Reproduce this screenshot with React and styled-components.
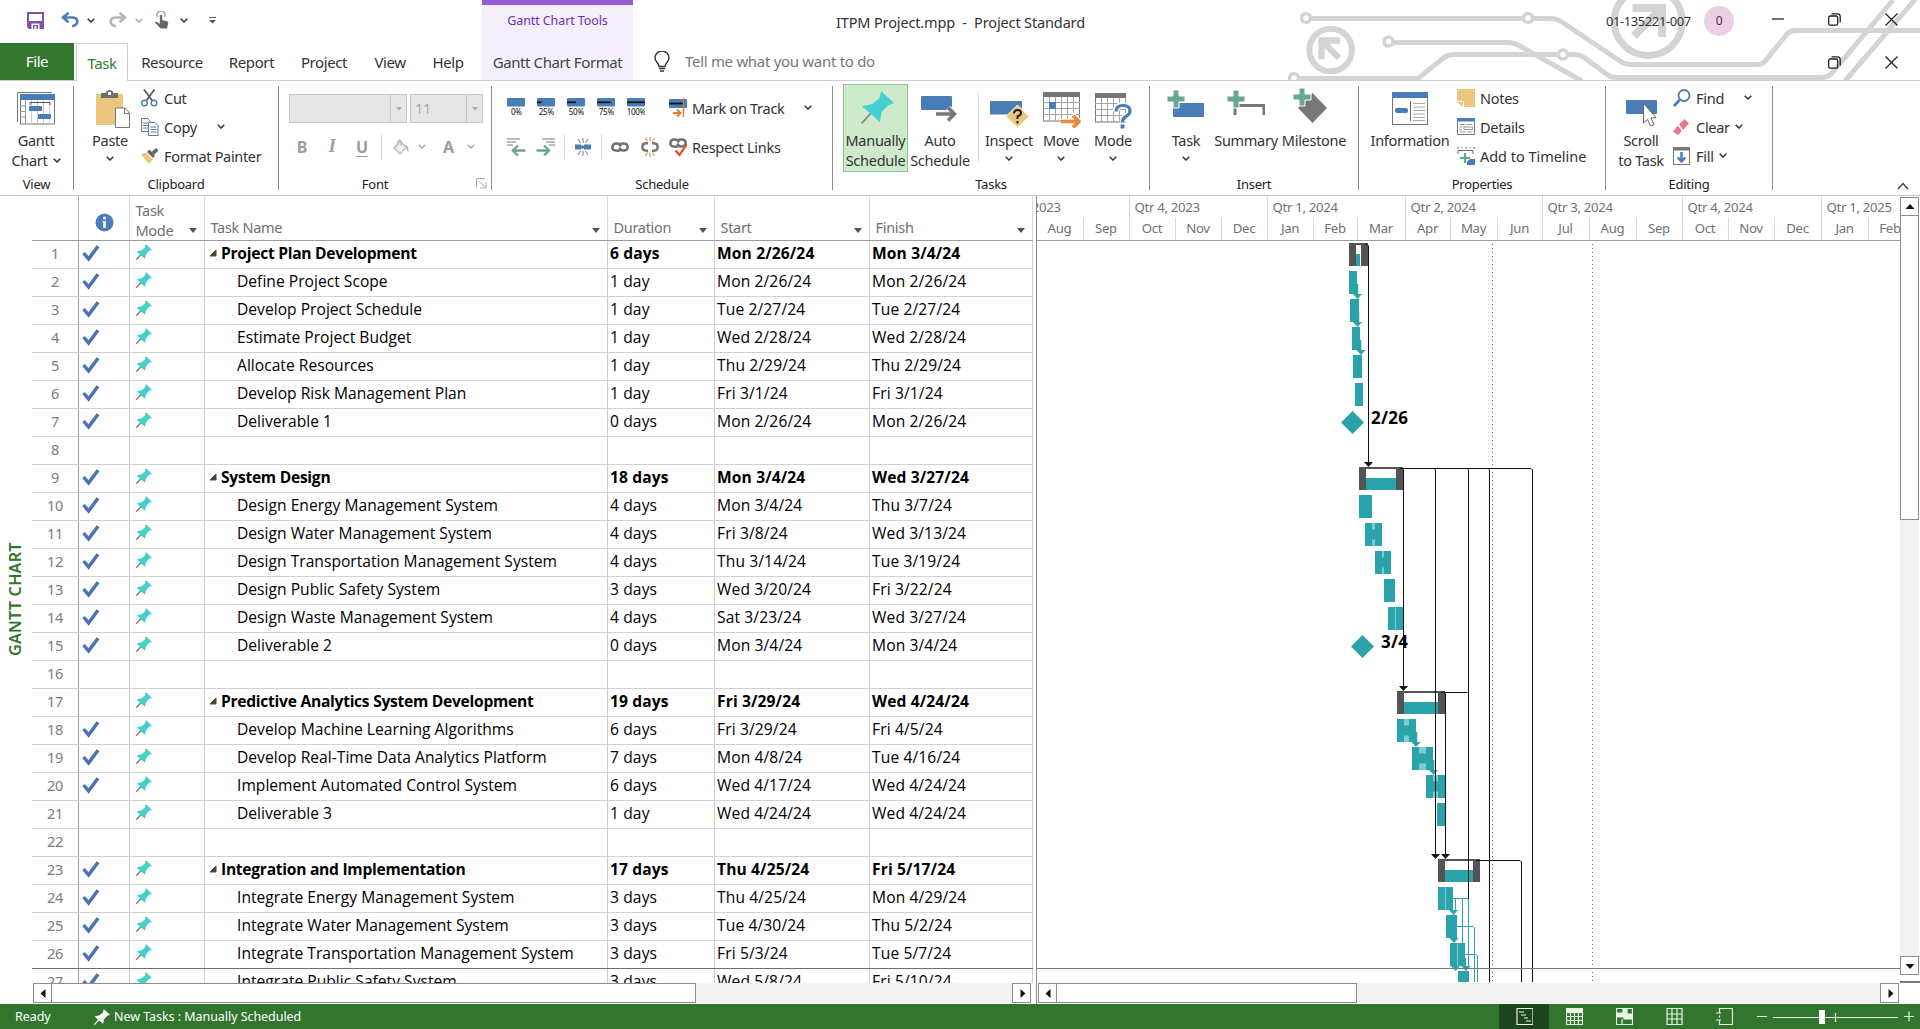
import React from 'react';
import styled, { createGlobalStyle, css } from 'styled-components';

const GREEN = '#31752f';
const TEAL = '#2ba3ab';
const BLUE = '#4a7cb5';

const Global = createGlobalStyle`
  * { box-sizing: border-box; }
  html, body { margin: 0; padding: 0; background: #fff; overflow: hidden; }
  svg { display: block; flex: none; }
`;

const Window = styled.div`
  width: 1920px;
  height: 1029px;
  display: flex;
  flex-direction: column;
  background: #fff;
  color: #333;
  overflow: hidden;
  white-space: nowrap;
  font: 14.5px/20px 'Noto Sans', 'Open Sans', sans-serif;
  letter-spacing: -0.28px;
`;

/* ---------- title bar and tabs ---------- */
const Header = styled.header`
  position: relative;
  height: 81px;
  border-bottom: 1px solid #cfcfcf;
`;
const Artwork = styled.svg`
  position: absolute;
  right: 0;
  top: 0;
`;
const TitleRow = styled.div`
  position: relative;
  display: flex;
  height: 43px;
`;
const QuickAccess = styled.div`
  display: flex;
  align-items: center;
  width: 482px;
  height: 40px;
  padding-left: 27px;
`;
const Slot = styled.span`
  display: flex;
  align-items: center;
  flex: none;
  margin-left: ${(p) => p.$ml || 0}px;
`;
const ContextTitle = styled.div`
  width: 151px;
  border-top: 5px solid #945fd2;
  background: #f5effc;
  color: #6a2fb5;
  font-size: 12.5px;
  line-height: 32px;
  letter-spacing: -0.1px;
  text-align: center;
`;
const DocTitle = styled.div`
  margin-left: 203px;
  line-height: 44px;
  font-size: 14.5px;
  white-space: pre;
  letter-spacing: -0.14px;
`;
const WindowControls = styled.div`
  display: flex;
  margin-left: auto;
  height: 38px;
  align-items: center;
`;
const UserName = styled.span`
  width: 98px;
  font-size: 13px;
  letter-spacing: -0.42px;
  padding-top: 3px;
`;
const Avatar = styled.span`
  width: 30px;
  height: 30px;
  margin: 4px 15px 0 0;
  border-radius: 50%;
  background: #ebcfe2;
  color: #5a1c4c;
  font-size: 12px;
  line-height: 30px;
  text-align: center;
`;
const ControlButton = styled.span`
  width: 57px;
  display: flex;
  justify-content: center;
`;
const TabRow = styled.nav`
  position: relative;
  display: flex;
  height: 38px;
  line-height: 39px;
  font-size: 15px;
  letter-spacing: -0.4px;
`;
const FileTab = styled.div`
  width: 74px;
  height: 37px;
  margin-right: 2px;
  background: ${GREEN};
  color: #fff;
  text-align: center;
  line-height: 37px;
`;
const Tab = styled.div`
  width: ${(p) => p.$w}px;
  text-align: center;
  ${(p) => p.$active && css`
    border: 1px solid #cfcfcf;
    border-bottom: 0;
    background: #fff;
    color: #2f7d2d;
    line-height: 38px;
  `}
  ${(p) => p.$context && css`
    margin-left: 5px;
    height: 37px;
    background: #f5effc;
    color: #444;
  `}
`;
const TellMe = styled.div`
  display: flex;
  align-items: center;
  gap: 15px;
  margin-left: 21px;
  height: 36px;
  color: #777;
  font-size: 15px;
  letter-spacing: -0.3px;
`;

/* ---------- ribbon ---------- */
const Ribbon = styled.div`
  display: flex;
  height: 115px;
  border-bottom: 1px solid #c8c8c8;
`;
const GroupBox = styled.section`
  display: flex;
  flex-direction: column;
  flex: none;
  width: ${(p) => p.$w}px;
`;
const GroupBody = styled.div`
  display: flex;
  height: 93px;
  padding-top: 3px;
`;
const GroupLabel = styled.div`
  display: flex;
  justify-content: center;
  position: relative;
  padding-top: 1px;
  font-size: 13px;
  line-height: 22px;
  letter-spacing: -0.25px;
  color: #222;
`;
const GroupRule = styled.i`
  width: 1px;
  height: 104px;
  margin-top: 5px;
  background: #8f8f8f;
`;
const Launcher = styled.span`
  position: absolute;
  right: 4px;
  top: 6px;
`;
const BigButton = styled.div`
  display: flex;
  flex-direction: column;
  align-items: center;
  flex: none;
  width: ${(p) => p.$w}px;
  height: 88px;
  margin-left: ${(p) => p.$ml || 0}px;
  border: 1px solid ${(p) => (p.$on ? '#92c490' : 'transparent')};
  background: ${(p) => (p.$on ? '#cdebcb' : 'none')};
`;
const BigIcon = styled.div`
  height: 45px;
  padding-top: ${(p) => p.$pt || 5}px;
  margin-left: ${(p) => p.$dx || 0}px;
`;
const Line = styled.div`
  display: flex;
  align-items: center;
  gap: 5px;
  height: 20px;
`;
const ChevronLine = styled(Line)`
  height: 17px;
`;
const SmallStack = styled.div`
  display: flex;
  flex-direction: column;
  margin-left: ${(p) => p.$ml || 0}px;
`;
const SmallButton = styled.div`
  display: flex;
  align-items: center;
  height: 29px;
  padding-bottom: 2px;
  letter-spacing: ${(p) => p.$ls || -0.28}px;
`;
const SmallIcon = styled.span`
  width: ${(p) => p.$w || 23}px;
  flex: none;
`;
const ThinRule = styled.i`
  width: 1px;
  height: ${(p) => p.$h}px;
  margin: ${(p) => p.$m};
  background: #dcdcdc;
`;
const FontPane = styled.div`
  padding: 10px 0 0 10px;
`;
const ComboRow = styled.div`
  display: flex;
  gap: 3px;
`;
const Combo = styled.div`
  display: flex;
  width: ${(p) => p.$w}px;
  height: 29px;
  border: 1px solid #c6c6c6;
  background: #e6e6e6;
  color: #adadad;
  line-height: 27px;
  padding-left: 4px;
`;
const ComboArrow = styled.span`
  display: flex;
  align-items: center;
  justify-content: center;
  width: 16px;
  margin-left: auto;
  border-left: 1px solid #c6c6c6;
`;
const FormatRow = styled.div`
  display: flex;
  align-items: center;
  height: 47px;
  margin-left: -2px;
  color: #9d9d9d;
  font-weight: 700;
  font-size: 16px;
`;
const Glyph = styled.span`
  width: 30px;
  text-align: center;
  ${(p) => p.$italic && css`font: italic 700 18px 'Liberation Serif', serif;`}
  ${(p) => p.$under && css`text-decoration: underline; text-underline-offset: 3px;`}
`;
const SchedulePane = styled.div`
  display: flex;
  padding: 4px 0 0 12px;
`;
const ScheduleRow = styled.div`
  display: flex;
  align-items: center;
  height: 39px;
`;
const Collapse = styled.div`
  margin: 101px 0 0 auto;
  padding-right: 11px;
`;

/* ---------- workspace ---------- */
const Workspace = styled.main`
  display: flex;
  height: 808px;
`;
const ViewName = styled.div`
  width: 32px;
  writing-mode: vertical-rl;
  transform: rotate(180deg);
  text-align: center;
  line-height: 30px;
  color: ${GREEN};
  font-weight: 600;
  font-size: 16.2px;
  letter-spacing: 0.2px;
  padding-top: 1px;
`;
const TablePanel = styled.div`
  width: 1004px;
  display: flex;
  flex-direction: column;
`;
const HeadRow = styled.div`
  display: flex;
  height: 45px;
  width: 1001px;
  border-bottom: 1px solid #9c9c9c;
`;
const COLS = { num: 47, info: 51, mode: 75, name: 403, dur: 107, start: 155, finish: 163 };
const HeadCell = styled.div`
  display: flex;
  align-items: flex-end;
  width: ${(p) => COLS[p.$col]}px;
  border-right: 1px solid ${(p) => (p.$col === 'num' ? '#b5b5b5' : '#dadada')};
  padding: 0 7px 3px 5.5px;
  color: #707078;
  font-size: 14.5px;
  letter-spacing: -0.3px;
  justify-content: space-between;
  ${(p) => p.$col === 'info' && css`padding: 0 0 8px 16px;`}
  ${(p) => p.$col === 'mode' && css`padding-bottom: 0;`}
`;
const HeadArrow = styled.i`
  border: 4px solid transparent;
  border-top: 5px solid #555;
  border-bottom: 0;
  margin-bottom: ${(p) => (p.$low ? 7 : 4)}px;
`;
const Rows = styled.div`
  height: 742px;
  overflow: hidden;
`;
const Row = styled.div`
  display: flex;
  width: 1001px;
  height: 28px;
  border-bottom: 1px solid ${(p) => (p.$dark ? '#6f6f6f' : '#d2d2d2')};
  font: ${(p) => (p.$bold ? 700 : 400)} 15.6px/24px 'Open Sans', sans-serif;
  letter-spacing: 0.12px;
  color: #000;
`;
const Cell = styled.div`
  width: ${(p) => COLS[p.$col]}px;
  border-right: 1px solid #cdcdcd;
  padding-left: 2px;
  ${(p) => p.$col === 'num' && css`
    border-right-color: #a0a0a0;
    padding: 0;
    text-align: center;
    color: #7c7c7c;
    font: 14.5px/24px 'Noto Sans', sans-serif;
    letter-spacing: -0.3px;
  `}
  ${(p) => p.$col === 'info' && css`padding: 3px 0 0 3px;`}
  ${(p) => p.$col === 'mode' && css`padding: 3px 0 0 6px;`}
  ${(p) => p.$col === 'name' && css`
    display: flex;
    gap: 4px;
    padding-left: ${p.$child ? 32 : 4}px;
    letter-spacing: ${p.$child ? 0.02 : -0.27}px;
  `}
`;
const Outline = styled.svg`
  margin-top: 8px;
`;

const ScrollBar = styled.div`
  display: flex;
  width: ${(p) => p.$w}px;
  height: 20px;
  margin-left: ${(p) => p.$ml || 0}px;
  margin-top: auto;
  margin-bottom: 1px;
  background: #f2f2f2;
`;
const ScrollButton = styled.span`
  display: flex;
  align-items: center;
  justify-content: center;
  flex: none;
  width: 19px;
  height: ${(p) => (p.$v ? 19 : 20)}px;
  border: 1px solid #8c8c8c;
  background: #fff;
  margin-left: ${(p) => (p.$end ? 'auto' : 0)};
`;
const Thumb = styled.span`
  width: ${(p) => p.$w}px;
  margin-left: -1px;
  border: 1px solid #8c8c8c;
  background: #fff;
`;
const VScroll = styled.div`
  display: flex;
  flex-direction: column;
  width: 19px;
  height: 778px;
  margin-top: 1px;
  background: #f2f2f2;
`;
const VThumb = styled.span`
  height: 304px;
  margin-bottom: auto;
  border: 1px solid #8c8c8c;
  border-top: 0;
  background: #fff;
`;
const Corner = styled.div`
  height: 2px;
  width: 20px;
  margin-top: 6px;
  background: #777;
`;

const ChartPanel = styled.div`
  display: flex;
  flex-direction: column;
  width: 864px;
  border-left: 1px solid #8c8c8c;
`;
const Timescale = styled.div`
  height: 45px;
  overflow: hidden;
  border-bottom: 1px solid #9c9c9c;
  color: #707078;
  font-size: 13.2px;
  letter-spacing: -0.3px;
`;
const Tier = styled.div`
  display: flex;
  height: 22px;
  line-height: ${(p) => p.$lh}px;
`;
const Quarter = styled.div`
  flex: none;
  width: ${(p) => p.$w}px;
  padding-left: 4.5px;
  margin-left: ${(p) => p.$ml || 0}px;
  border-right: 1px solid #dadada;
`;
const Month = styled.div`
  flex: none;
  width: ${(p) => p.$w}px;
  padding-right: 1px;
  text-align: center;
  border-right: 1px solid #dadada;
`;

/* ---------- status bar ---------- */
const StatusBar = styled.footer`
  display: flex;
  align-items: center;
  height: 25px;
  background: ${GREEN};
  color: #fff;
  font-size: 12.5px;
  letter-spacing: -0.05px;
`;
const ReadyText = styled.span`
  width: 94px;
  padding-left: 15px;
`;
const ViewButtons = styled.div`
  display: flex;
  margin-left: auto;
`;
const ViewButton = styled.span`
  display: flex;
  align-items: center;
  justify-content: center;
  width: 50px;
  height: 25px;
  background: ${(p) => (p.$on ? '#1b461b' : 'none')};
`;
const Zoom = styled.div`
  width: 171px;
`;

/* ---------- icons ---------- */
const Chevron = ({ c = '#333' }) => (
  <svg width="8" height="5" viewBox="0 0 8 5"><path d="M.7.7 4 4 7.3.7" fill="none" stroke={c} strokeWidth="1.5" /></svg>
);
const DropMark = () => <svg width="6" height="4"><path d="M0 0h6L3 3.500z" fill="#aaa" /></svg>;
const Pin = ({ s = 33, head = '#45cfd0', needle = '#808080', w = 1.6 }) => (
  <svg width={s} height={s} viewBox="0 0 33 33">
    <path d="M.6 32.4 11 21" stroke={needle} strokeWidth={w} />
    <path d="M20 0 33 12 27.500 14 20.500 21 19 31 1 15.500 11.500 12.800 18.500 7Z" fill={head} />
  </svg>
);
const Check = () => (
  <svg width="18" height="18" viewBox="0 0 18 18">
    <path d="M1.600 9 6.600 15 16 2.200" fill="none" stroke="#4a72b0" strokeWidth="3.500" />
  </svg>
);
const Save = () => (
  <svg width="17" height="17" viewBox="0 0 17 17">
    <path d="M0 0H17V17H2L0 15Z" fill="#7d51a5" /><path d="M2 2h13v7H2z" fill="#fff" />
    <path d="M4.500 11.500h8V17h-8z" fill="#fff" /><path d="M6 13h5v4H6z" fill="#7d51a5" /><path d="M7.500 14h2v3h-2z" fill="#fff" />
  </svg>
);
const Undo = ({ flip, c = BLUE }) => (
  <svg width="18" height="16" viewBox="0 0 18 16">
    <g transform={flip ? 'translate(18 0) scale(-1 1)' : undefined} fill="none" stroke={c} strokeWidth="2.600">
      <path d="M7.500 .8 2 5.500 7.500 10.200M2 5.500H11.500Q16.500 5.800 16.300 9.500 16 13.500 11 14.300" />
    </g>
  </svg>
);
const Touch = () => (
  <svg width="14" height="18" viewBox="0 0 14 18">
    <path d="M2.600 6A4 4 0 1 1 9.500 6" fill="none" stroke="#8fb4dc" strokeWidth="1.700" />
    <path d="M4.800 4.500q1.200-1.500 2.400 0V9l5.300 1.400q1 .4.700 2L12 17.600H5.500L0 11.500q1-1.300 2.500-.3L4.800 13Z" fill="#666" />
  </svg>
);
const Bulb = () => (
  <svg width="16" height="21" viewBox="0 0 16 21" fill="none" stroke="#333" strokeWidth="1.500">
    <path d="M5 15.500C5 12 1 11 1 7a7 7 0 0 1 14 0c0 4-4 5-4 8.500Z" /><path d="M5 17.500h6M6 20h4" />
  </svg>
);
const Restore = () => (
  <svg width="13" height="13" viewBox="0 0 13 13" fill="none" stroke="#222" strokeWidth="1.300">
    <rect x=".7" y="3" width="9" height="9.200" rx="1.500" /><path d="M3.500 .8H9.500Q12.200.8 12.200 3.500V9.500" />
  </svg>
);
const Close = () => (
  <svg width="13" height="13" viewBox="0 0 13 13"><path d="M.5.5 12.500 12.500M12.500.5.5 12.500" stroke="#222" strokeWidth="1.300" /></svg>
);

const GanttIcon = () => (
  <svg width="38" height="33" viewBox="0 0 38 33">
    <path d="M.5 30V.5H35" fill="none" stroke="#777" />
    <rect x="3.500" y="2.500" width="34" height="29.500" fill="#fff" stroke="#777" />
    <path d="M3 2h35v6H3z" fill={BLUE} />
    <path d="M8.500 8v24M3 14h5M3 19.500h5M3 25h5" stroke="#999" fill="none" />
    <path d="M14.500 8v24M20.500 8v24M26.500 8v24M32.500 8v24" stroke="#bcd" />
    <path d="M13 13V10.500H33V13" fill="none" stroke="#555" />
    <rect x="12" y="14" width="13" height="5" rx="1" fill={BLUE} /><rect x="21" y="22" width="13" height="5" rx="1" fill={BLUE} />
  </svg>
);
const PasteIcon = () => (
  <svg width="34" height="38" viewBox="0 0 34 38">
    <path d="M0 4h27v31H0z" fill="#ebc67c" />
    <path d="M5 3h4.500q1-3 4-3t4 3H22v5H5z" fill="#6e6e6e" /><rect x="12" y="2" width="3" height="3" fill="#fff" />
    <path d="M19.500 18H29l4.500 5V37.500h-14z" fill="#fff" stroke="#777" /><path d="M28.500 18v5.500h5" fill="none" stroke="#777" />
  </svg>
);
const Scissors = () => (
  <svg width="17" height="18" viewBox="0 0 17 18" fill="none">
    <path d="M3 .5 11.500 12M13.500.5 5 12" stroke="#666" strokeWidth="2" />
    <circle cx="3.500" cy="14" r="2.800" stroke={BLUE} strokeWidth="1.400" /><circle cx="13" cy="14" r="2.800" stroke={BLUE} strokeWidth="1.400" />
  </svg>
);
const CopyIcon = () => (
  <svg width="18" height="18" viewBox="0 0 18 18" fill="#fff" stroke="#777">
    <path d="M.5.5h6l3 3V13.500h-9z" /><path d="M2 5h5M2 7.500h5M2 10h5" stroke={BLUE} />
    <path d="M7.500 4.500H14l3 3V17.500H7.500z" /><path d="M9.500 9h6M9.500 11.500h6M9.500 14h6" stroke={BLUE} />
  </svg>
);
const Painter = () => (
  <svg width="18" height="16" viewBox="0 0 18 16">
    <path d="M0 6.500 5 4.500 12 11.500 8 16Z" fill="#ebc67c" /><path d="M6 4 8.500 1.500 14 7.500 12 10Z" fill="#666" /><path d="M10.500 4 15 0 17.500 2.500 13.500 6.500Z" fill="#666" />
  </svg>
);
const Bucket = () => (
  <svg width="17" height="16" viewBox="0 0 17 16" fill="none" stroke="#b5b5b5" strokeWidth="1.200">
    <path d="M7 2 13.500 8.500 7 15 1 9Z" fill="#efefef" /><path d="M5 6V2Q6.500-.5 8 2V7" /><path d="M12 6q4 1 3.500 7-2-2-2-5Z" fill="#aaa" stroke="none" />
  </svg>
);
const Percent = ({ v, label }) => (
  <svg width="18" height="19" viewBox="0 0 18 19">
    <rect width="18" height="8.500" rx="1" fill={BLUE} />
    {v > 0 && <path d={`M0 4.300H${v * 0.18}`} stroke="#111" strokeWidth="1.700" />}
    <text x="9.300" y="16.500" textAnchor="middle" fontFamily="Noto Sans" fontSize="8" letterSpacing="-.3" fill="#111">{label}</text>
  </svg>
);
const TrackIcon = () => (
  <svg width="18" height="19" viewBox="0 0 18 19">
    <rect y="1" width="18" height="9" rx="1" fill={BLUE} /><path d="M0 5.500h15" stroke="#111" strokeWidth="1.800" />
    <path d="M14.500 0V19" stroke="#e07b2e" strokeWidth="1.400" /><path d="M4 15h6M8 11.500 11.500 15 8 18.500" fill="none" stroke="#e07b2e" strokeWidth="2" />
  </svg>
);
const Indent = ({ flip }) => (
  <svg width="19" height="18" viewBox="0 0 19 18">
    <g transform={flip ? 'translate(19 0) scale(-1 1)' : undefined} fill="none">
      <path d="M0 1h13M0 4h9M0 7h6" stroke="#7a7a7a" strokeWidth="1.200" />
      <path d="M18.500 12.500H6.500M11 7.500 5.800 12.500 11 17.500" stroke="#6ba292" strokeWidth="2.300" />
    </g>
  </svg>
);
const Split = () => (
  <svg width="16" height="18" viewBox="0 0 16 18">
    <path d="M0 6.500h6v5H0zM9 6.500h7v5H9zM5 7.500h6v3H5z" fill={BLUE} />
    <path d="M8 0v5M8 13v5M3 1 5.500 5M13 1 10.500 5M3 17 5.500 13M13 17 10.500 13" stroke="#8a8a8a" strokeWidth="1.100" />
  </svg>
);
const LinkShape = () => (
  <g fill="none" stroke="#6f6f6f" strokeWidth="2.500">
    <path d="M10 8.200Q8 10.500 5.500 9.500 1 9.500 1.400 6 1.800 2.300 5.500 2.500 9 2.300 9.600 5.500" />
    <path d="M8 4.200Q9.500 2 12.500 2.500 16.600 2.300 16.600 6 16.600 9.500 12.500 9.500 9.500 9.700 8.500 6.500" />
  </g>
);
const LinkIcon = () => <svg width="18" height="12" viewBox="0 0 18 12"><LinkShape /></svg>;
const Unlink = () => (
  <svg width="18" height="20" viewBox="0 0 18 20" fill="none">
    <path d="M7 6.300H5Q1.300 6.500 1.300 10T5 13.700H7M11 6.300h2q3.700.2 3.700 3.700T13 13.700H11" stroke="#7a7a7a" strokeWidth="2.500" />
    <path d="M9 0v4.500M9 15.500V20M4.500 1 6.500 4.500M13.500 1 11.500 4.500M4.500 19 6.500 15.500M13.500 19 11.500 15.500" stroke="#e59a52" strokeWidth="1.200" />
  </svg>
);
const RespectIcon = () => (
  <svg width="18" height="20" viewBox="0 0 18 20"><LinkShape /><path d="M6.500 13.500 10.500 18 18 7" fill="none" stroke="#dc5230" strokeWidth="2.300" /></svg>
);
const AutoIcon = () => (
  <svg width="36" height="26" viewBox="0 0 36 26">
    <rect width="31" height="14" rx="1" fill={BLUE} />
    <path d="M15 18H33M27 12 33.500 18 27 24" fill="none" stroke="#fff" strokeWidth="6" /><path d="M15 18H33M27 11.500 33.500 18 27 24.500" fill="none" stroke="#777" strokeWidth="3.600" />
  </svg>
);
const InspectIcon = () => (
  <svg width="39" height="28" viewBox="0 0 39 28">
    <rect width="32" height="13.500" rx="1" fill={BLUE} />
    <path d="M27.500 4 39 15.500 27.500 27 16 15.500Z" fill="#ebc67c" stroke="#fff" />
    <path d="M24 12.500q0-3.500 3.500-3.500t3.500 3q0 2-3.500 3.500V18M27.500 20v2.500" fill="none" stroke="#222" strokeWidth="2" />
  </svg>
);
const MiniGrid = ({ w }) => (
  <g fill="none">
    <rect x=".5" y="2" width={w - 1} height="27" stroke="#777" fill="#fff" />
    {[1, 2, 3, 4, 5].filter((i) => i * 6 < w).map((i) => <path key={i} d={`M${i * 6 + 0.5} 4V29`} stroke="#a5a5a5" />)}
    <path d={`M0 10.500H${w}M0 16.500H${w}M0 22.500H${w}`} stroke="#a5a5a5" />
    <path d={`M0 0H${w}V5H0z`} fill="#777" />
  </g>
);
const MoveIcon = () => (
  <svg width="38" height="36" viewBox="0 0 38 36">
    <MiniGrid w={37} /><path d="M6 10h7v7H6z" fill={BLUE} />
    <path d="M18 29.500H35M29 23 36 29.500 29 36" fill="none" stroke="#fff" strokeWidth="6" /><path d="M18 29.500H35M30 23.500 36 29.500 30 35.500" fill="none" stroke="#e8893c" strokeWidth="3.600" />
  </svg>
);
const ModeIcon = () => (
  <svg width="37" height="36" viewBox="0 0 37 36">
    <MiniGrid w={31} />
    <path d="M21 18.500Q21 12.500 28 12.500T35 18Q35 21 31 23.500 27.500 25.500 27.500 29" fill="none" stroke="#fff" strokeWidth="6" />
    <path d="M21 18.500Q21 12.500 28 12.500T35 18Q35 21 31 23.500 27.500 25.500 27.500 29" fill="none" stroke={BLUE} strokeWidth="3.200" /><path d="M25.500 31.500h4v4h-4z" fill={BLUE} />
  </svg>
);
const Plus = () => <path d="M6 0h6v6h6v6h-6v6H6v-6H0V6h6z" fill="#6aa790" stroke="#fff" />;
const InsertTask = () => (
  <svg width="38" height="28" viewBox="0 0 38 28"><rect x="6" y="13" width="31" height="14" rx="1" fill={BLUE} /><Plus /></svg>
);
const InsertSummary = () => (
  <svg width="38" height="26" viewBox="0 0 38 26"><path d="M8 25V15.500H37V25" fill="none" stroke="#777" strokeWidth="3" /><Plus /></svg>
);
const InsertMilestone = () => (
  <svg width="34" height="35" viewBox="0 0 34 35"><path d="M19.500 5 34 20 19.500 35 5 20Z" fill="#777" /><Plus /></svg>
);
const InfoBig = () => (
  <svg width="36" height="33" viewBox="0 0 36 33">
    <rect x=".5" y=".5" width="35" height="32" fill="#fff" stroke="#777" /><path d="M0 0h36v6H0z" fill={BLUE} />
    <path d="M18.500 9v20" stroke="#666" /><rect x="3" y="16" width="13" height="5" rx="2" fill={BLUE} />
    <path d="M21 11.500h12M21 15h12M21 18.500h12M21 22h12M21 25.500h12M21 28.500h12" stroke="#aaa" />
  </svg>
);
const Note = () => (
  <svg width="18" height="18" viewBox="0 0 18 18"><path d="M0 0h18v18H7V12H0z" fill="#ebc67c" /><path d="M0 13h6v5z" fill="#ebc67c" /></svg>
);
const DetailsIcon = () => (
  <svg width="18" height="17" viewBox="0 0 18 17">
    <rect x=".5" y=".5" width="17" height="16" fill="#fff" stroke="#777" /><path d="M0 0h18v3.500H0z" fill={BLUE} />
    <path d="M2.500 6.500h5M9.500 6.500h6M2.500 9h3M7 9h8.500v2.500H7zM2.500 12h3M2.500 14h6M10 14h5.500" fill="none" stroke="#999" />
  </svg>
);
const TimelineIcon = () => (
  <svg width="18" height="18" viewBox="0 0 18 18">
    <path d="M1 0v2M5 0v1M9 0v2M13 0v1M17 0v2M1 7V3.500H16V7" fill="none" stroke="#666" />
    <path d="M3 11h10M8 6v10" stroke="#6aa790" strokeWidth="2.200" /><path d="M10 14.500 13 12h5v6h-8z" fill={BLUE} />
  </svg>
);
const ScrollIcon = () => (
  <svg width="31" height="27" viewBox="0 0 31 27">
    <rect width="31" height="14" rx="1" fill={BLUE} />
    <path d="M17.500 3.500 30 17.500 25 18 28 24.500 24.500 26 21.500 19.500 17.500 23Z" fill="#fff" stroke="#666" />
  </svg>
);
const FindIcon = () => (
  <svg width="18" height="18" viewBox="0 0 18 18" fill="none" stroke={BLUE}><circle cx="11" cy="6.500" r="5.500" strokeWidth="1.800" /><path d="M6.500 11 1 17" strokeWidth="2.600" /></svg>
);
const Eraser = () => (
  <svg width="16" height="16" viewBox="0 0 16 16"><path d="M6 5.500 11.500 0 16 4.500 10 11Z" fill="#e57a8c" /><path d="M4.800 6.800 9 12 5 16 0 12.500Z" fill="#e57a8c" /></svg>
);
const FillIcon = () => (
  <svg width="17" height="18" viewBox="0 0 17 18"><rect x=".5" y=".5" width="16" height="17" fill="#fff" stroke="#777" /><path d="M0 0h17v3.500H0z" fill="#777" />
    <path d="M8.500 5v9M4.700 10.500 8.500 14.500 12.300 10.500" fill="none" stroke={BLUE} strokeWidth="2.500" /></svg>
);
const InfoDot = () => (
  <svg width="19" height="19" viewBox="0 0 19 19"><circle cx="9.500" cy="9.500" r="9" fill="#4a7fb8" /><circle cx="9.500" cy="5" r="1.500" fill="#fff" /><path d="M7.500 8h3.300v7h-2.600V9.500h-.7z" fill="#fff" /></svg>
);
const Tri = ({ d }) => {
  const paths = { left: 'M7 0V9L2 4.500Z', right: 'M3 0V9L8 4.500Z', up: 'M0 7H9L4.500 2Z', down: 'M0 3H9L4.500 8Z' };
  return <svg width="10" height="9" viewBox="0 0 9 9"><path d={paths[d]} fill="#111" /></svg>;
};

const Circuit = () => (
  <Artwork width="640" height="80" viewBox="1280 0 640 80" fill="none" stroke="#d4d4d4" strokeWidth="5">
    <g strokeWidth="3.500">
      <circle cx="1306" cy="18" r="4.500" /><circle cx="1528" cy="18" r="4.500" /><circle cx="1388.500" cy="41.500" r="4.500" />
      <circle cx="1563" cy="54.500" r="4.500" /><circle cx="1294" cy="78" r="4.500" />
    </g>
    <path d="M1311 18.500H1523M1533 18.500H1550Q1557 18.500 1562 22L1620 61Q1625 64.500 1630 64.500H1757Q1763 64.500 1766 60L1787 34Q1790 30.500 1796 30.500H1920" />
    <path d="M1393 42.500H1508Q1514 42.500 1520 46L1582 81" />
    <path d="M1299 78.500H1418L1444 57.500Q1448 54.500 1454 54.500H1558M1568 54.500H1574Q1580 54.500 1585 58L1607 74.500Q1611 77.500 1617 77.500H1822Q1828 77.500 1832 73L1893 0" />
    <path d="M1845 81 1918 -4" />
    <circle cx="1330.700" cy="50" r="21.300" strokeWidth="6" /><circle cx="1648.200" cy="21.500" r="34" strokeWidth="7" />
    <path d="M1340 40.500H1321.500V59M1323 42 1339 58" strokeWidth="6.500" />
    <path d="M1632.500 8H1662V37M1660 10 1634 36" strokeWidth="8" />
  </Artwork>
);

/* ---------- data ---------- */
const TASKS = [
  ['Project Plan Development', '6 days', 'Mon 2/26/24', 'Mon 3/4/24', 1, 1],
  ['Define Project Scope', '1 day', 'Mon 2/26/24', 'Mon 2/26/24', 1],
  ['Develop Project Schedule', '1 day', 'Tue 2/27/24', 'Tue 2/27/24', 1],
  ['Estimate Project Budget', '1 day', 'Wed 2/28/24', 'Wed 2/28/24', 1],
  ['Allocate Resources', '1 day', 'Thu 2/29/24', 'Thu 2/29/24', 1],
  ['Develop Risk Management Plan', '1 day', 'Fri 3/1/24', 'Fri 3/1/24', 1],
  ['Deliverable 1', '0 days', 'Mon 2/26/24', 'Mon 2/26/24', 1],
  null,
  ['System Design', '18 days', 'Mon 3/4/24', 'Wed 3/27/24', 1, 1],
  ['Design Energy Management System', '4 days', 'Mon 3/4/24', 'Thu 3/7/24', 1],
  ['Design Water Management System', '4 days', 'Fri 3/8/24', 'Wed 3/13/24', 1],
  ['Design Transportation Management System', '4 days', 'Thu 3/14/24', 'Tue 3/19/24', 1],
  ['Design Public Safety System', '3 days', 'Wed 3/20/24', 'Fri 3/22/24', 1],
  ['Design Waste Management System', '4 days', 'Sat 3/23/24', 'Wed 3/27/24', 1],
  ['Deliverable 2', '0 days', 'Mon 3/4/24', 'Mon 3/4/24', 1],
  null,
  ['Predictive Analytics System Development', '19 days', 'Fri 3/29/24', 'Wed 4/24/24', 0, 1],
  ['Develop Machine Learning Algorithms', '6 days', 'Fri 3/29/24', 'Fri 4/5/24', 1],
  ['Develop Real-Time Data Analytics Platform', '7 days', 'Mon 4/8/24', 'Tue 4/16/24', 1],
  ['Implement Automated Control System', '6 days', 'Wed 4/17/24', 'Wed 4/24/24', 1],
  ['Deliverable 3', '1 day', 'Wed 4/24/24', 'Wed 4/24/24', 0],
  null,
  ['Integration and Implementation', '17 days', 'Thu 4/25/24', 'Fri 5/17/24', 1, 1],
  ['Integrate Energy Management System', '3 days', 'Thu 4/25/24', 'Mon 4/29/24', 1],
  ['Integrate Water Management System', '3 days', 'Tue 4/30/24', 'Thu 5/2/24', 1],
  ['Integrate Transportation Management System', '3 days', 'Fri 5/3/24', 'Tue 5/7/24', 1],
  ['Integrate Public Safety System', '3 days', 'Wed 5/8/24', 'Fri 5/10/24', 1],
];

const QUARTERS = [['Qtr 3, 2023', 139], ['Qtr 4, 2023', 138], ['Qtr 1, 2024', 138], ['Qtr 2, 2024', 137], ['Qtr 3, 2024', 140], ['Qtr 4, 2024', 139], ['Qtr 1, 2025', 137]];
const MONTHS = [['Aug', 47], ['Sep', 46], ['Oct', 46], ['Nov', 46], ['Dec', 46], ['Jan', 46], ['Feb', 44], ['Mar', 48], ['Apr', 45], ['May', 47], ['Jun', 45], ['Jul', 47], ['Aug', 47], ['Sep', 46], ['Oct', 46], ['Nov', 46], ['Dec', 47], ['Jan', 47], ['Feb', 44]];

/* ---------- chart ---------- */
const rowY = (n) => 241 + 28 * (n - 1);
const BARS = [
  [2, 1349, 1357], [3, 1350, 1359], [4, 1352, 1360], [5, 1353, 1362], [6, 1355, 1363],
  [10, 1359, 1372], [11, 1365, 1382, 1372, 3], [12, 1375, 1391, 1382, 2], [13, 1384, 1395], [14, 1388, 1403, 1395, 1, 1],
  [18, 1397, 1416, 1404, 5], [19, 1412, 1433, 1419, 7], [20, 1426, 1445, 1433, 5], [21, 1437, 1445],
  [24, 1438, 1453, 1445, 1, 1], [25, 1446, 1457], [26, 1450, 1465, 1457, 1, 1], [27, 1458, 1469],
];
const SUMMARIES = [[1, 1349, 1368], [9, 1359, 1403], [17, 1397, 1445], [23, 1438, 1480]];
const ARROWS = [[1368.5, 462], [1403.5, 686], [1435.5, 854], [1445.5, 854]];
const TEAL_ARROWS = [[1357.5, 294], [1357.5, 322], [1361, 350], [1416, 742], [1433.5, 770], [1453.5, 910], [1454, 938], [1455.5, 966], [1466, 966]];
const head = ([x, y]) => `M${x - 4.5} ${y}H${x + 4.5}L${x} ${y + 5}Z`;

const Chart = () => (
  <svg width="863" height="741" viewBox="1037 241 863 741">
    <path d="M1492.500 244V982M1592.500 244V982" stroke="#6a6a6a" strokeDasharray="1 3" />
    {SUMMARIES.map(([n, a, b]) => {
      const y = rowY(n) + 2;
      return (
        <g key={n}>
          <path d={`M${a} ${y}H${b}V${y + 23}H${b - 7}V${y + 2}H${a + 7}V${y + 23}H${a}Z`} fill="#545454" />
          <rect x={a + 7} y={y + 11} width={n === 1 ? 4 : b - a - 14} height="12" fill={TEAL} />
        </g>
      );
    })}
    {BARS.map(([n, a, b, gx, gw, full]) => {
      const y = rowY(n) + 2;
      return (
        <g key={n}>
          <rect x={a} y={y} width={b - a} height="23" fill={TEAL} />
          {gx && <rect x={gx} y={y} width={gw} height={full ? 23 : 6.5} fill="#79cdd3" />}
          {gx && !full && <rect x={gx} y={y + 16.5} width={gw} height="6.500" fill="#79cdd3" />}
        </g>
      );
    })}
    {[[1352.5, 422.5], [1362.5, 646.5]].map(([x, y]) => (
      <path key={y} d={`M${x} ${y - 11.5}L${x + 11.5} ${y}L${x} ${y + 11.5}L${x - 11.5} ${y}Z`} fill={TEAL} />
    ))}
    <g fill="none" stroke={TEAL}>
      <path d="M1357.500 284V294M1358.500 312V322M1360.500 340V350M1416.500 732V742M1433.500 760V770" strokeWidth="1.500" />
      <path d="M1453 898.500H1468.500M1455.500 899V911M1462.500 899V943M1468.500 899V968M1457 926.500H1473L1474.500 928V982M1465 954.500H1476L1477.500 956V982M1453.500 930V940M1465.500 958V968" />
    </g>
    {TEAL_ARROWS.map((a) => <path key={a.join()} d={head(a)} fill={TEAL} />)}
    <g fill="none" stroke="#111">
      <path d="M1365 244.500H1367L1368.500 246V463" />
      <path d="M1400 468.500H1531L1532.500 470V982M1402 468.500 1403.500 470V687M1434 468.500 1435.500 470V855M1467 468.500 1468.500 470V899M1488 468.500 1489.500 470V982" />
      <path d="M1441 692.500H1467.500M1444 692.500 1445.500 694V855" />
      <path d="M1476 860.500H1520L1521.500 862V982" />
    </g>
    {ARROWS.map((a) => <path key={a.join()} d={head(a)} fill="#111" />)}
    <path d="M1037 968.500H1900" stroke="#777" />
    <g fontFamily="Noto Sans" fontWeight="700" fontSize="17" letterSpacing=".25" fill="#000">
      <text x="1371" y="424">2/26</text><text x="1381" y="648">3/4</text>
    </g>
  </svg>
);

const Group = ({ w, label, dx = 0, children, launcher }) => (
  <>
    <GroupBox $w={w}>
      <GroupBody>{children}</GroupBody>
      <GroupLabel>
        <Slot $ml={dx}>{label}</Slot>
        {launcher && <Launcher><svg width="11" height="11" viewBox="0 0 11 11" fill="none" stroke="#aaa"><path d="M.5 9V.5H9M3.500 3.500 9.500 9.500M10 4v6H4" /></svg></Launcher>}
      </GroupLabel>
    </GroupBox>
    <GroupRule />
  </>
);
const Big = ({ w, ml, on, icon, pt, dx, a, b, chev }) => (
  <BigButton $w={w} $ml={ml} $on={on}>
    <BigIcon $pt={pt} $dx={dx}>{icon}</BigIcon>
    <Line>{a}</Line>
    {b && <Line>{b}{chev && <Chevron />}</Line>}
    {!b && chev && <ChevronLine><Chevron /></ChevronLine>}
  </BigButton>
);
const Small = ({ icon, label, chev, ls }) => (
  <SmallButton $ls={ls}><SmallIcon>{icon}</SmallIcon>{label}{chev && <Slot $ml={chev}><Chevron /></Slot>}</SmallButton>
);
const Head = ({ col, children }) => (
  <HeadCell $col={col}><span>{children}</span><HeadArrow $low={col === 'mode'} /></HeadCell>
);

const VIEW_ICONS = [
  <path d="M1 .5h16v16H1zM3 4h5M5 7h5M8 10h4M10 13h5" />,
  <><path d="M.5.5h16v16H.5zM.5 4.500h16M4.500 4v12M8.500 4v12M12.500 4v12M.5 8.500h16M.5 12.500h16" /><path d="M.5.5h16v3.500H.5z" fill="#e8f5e4" /></>,
  <><path d="M.5.5h16v16H.5zM6 11v6" /><path d="M1 5h6V1h4v5h6v5H8V9H1z" fill="#e8f5e4" /></>,
  <path d="M1 .5h15v16H1zM6 .5v16M11 .5v16M1 6h15M1 11h15" />,
  <path d="M3.500 5V.5h13v16h-13V12M3.500 9.500V7.500M0 5h5M0 12h5" />,
];

export default function App() {
  return (
    <Window>
      <Global />
      <Header>
        <Circuit />
        <TitleRow>
          <QuickAccess>
            <Save />
            <Slot $ml={17}><Undo /></Slot><Slot $ml={8}><Chevron /></Slot>
            <Slot $ml={14}><Undo flip c="#b5b5b5" /></Slot><Slot $ml={8}><Chevron c="#aaa" /></Slot>
            <Slot $ml={12}><Touch /></Slot><Slot $ml={11}><Chevron /></Slot>
            <Slot $ml={21}><svg width="7" height="7" viewBox="0 0 7 7"><path d="M0 .6h7" stroke="#555" /><path d="M0 3h7L3.500 6.500z" fill="#555" /></svg></Slot>
          </QuickAccess>
          <ContextTitle>Gantt Chart Tools</ContextTitle>
          <DocTitle>{'ITPM Project.mpp  -  Project Standard'}</DocTitle>
          <WindowControls>
            <UserName>01-135221-007</UserName>
            <Avatar>0</Avatar>
            <ControlButton><svg width="12" height="2"><path d="M0 1h12" stroke="#222" strokeWidth="1.300" /></svg></ControlButton>
            <ControlButton><Restore /></ControlButton>
            <ControlButton><Close /></ControlButton>
          </WindowControls>
        </TitleRow>
        <TabRow>
          <FileTab>File</FileTab>
          <Tab $w={52} $active>Task</Tab>
          <Tab $w={88}>Resource</Tab>
          <Tab $w={71}>Report</Tab>
          <Tab $w={74}>Project</Tab>
          <Tab $w={58}>View</Tab>
          <Tab $w={58}>Help</Tab>
          <Tab $w={151} $context>Gantt Chart Format</Tab>
          <TellMe><Bulb />Tell me what you want to do</TellMe>
          <WindowControls>
            <ControlButton><Restore /></ControlButton>
            <ControlButton><Close /></ControlButton>
          </WindowControls>
        </TabRow>
      </Header>

      <Ribbon>
        <Group w={73} label="View">
          <Big w={64} ml={4} icon={<GanttIcon />} pt={7} a="Gantt" b="Chart" chev />
        </Group>
        <Group w={204} label="Clipboard">
          <Big w={56} ml={8} icon={<PasteIcon />} pt={5} dx={6} a="Paste" chev />
          <SmallStack $ml={3}>
            <Small icon={<Scissors />} label="Cut" />
            <Small icon={<CopyIcon />} label="Copy" chev={20} />
            <Small icon={<Painter />} label="Format Painter" ls={-0.33} />
          </SmallStack>
        </Group>
        <Group w={212} label="Font" dx={-20} launcher>
          <FontPane>
            <ComboRow>
              <Combo $w={118}><ComboArrow><DropMark /></ComboArrow></Combo>
              <Combo $w={73}>11<ComboArrow><DropMark /></ComboArrow></Combo>
            </ComboRow>
            <FormatRow>
              <Glyph>B</Glyph><Glyph $italic>I</Glyph><Glyph $under>U</Glyph>
              <ThinRule $h={26} $m="0 11px 0 4px" />
              <Bucket /><Slot $ml={8}><Chevron c="#aaa" /></Slot>
              <Slot $ml={17}>A</Slot><Slot $ml={13}><Chevron c="#aaa" /></Slot>
            </FormatRow>
          </FontPane>
        </Group>
        <Group w={340} label="Schedule">
          <SchedulePane>
            <div>
              <ScheduleRow>
                {[0, 25, 50, 75, 100].map((v) => <SmallIcon key={v} $w={30}><Slot $ml={3}><Percent v={v} label={`${v}%`} /></Slot></SmallIcon>)}
              </ScheduleRow>
              <ScheduleRow>
                <Slot $ml={3}><Indent /></Slot><Slot $ml={10}><Indent flip /></Slot>
                <ThinRule $h={26} $m="0 10px 0 9px" /><Split /><ThinRule $h={26} $m="0 9px 0 10px" />
                <LinkIcon /><Slot $ml={12}><Unlink /></Slot>
              </ScheduleRow>
            </div>
            <SmallStack $ml={10}>
              <ScheduleRow><SmallIcon $w={23}><TrackIcon /></SmallIcon>Mark on Track<Slot $ml={19}><Chevron /></Slot></ScheduleRow>
              <ScheduleRow><SmallIcon $w={23}><RespectIcon /></SmallIcon>Respect Links</ScheduleRow>
            </SmallStack>
          </SchedulePane>
        </Group>
        <Group w={316} label="Tasks">
          <Big w={65} ml={10} on icon={<Pin />} pt={6} dx={3} a="Manually" b="Schedule" />
          <Big w={64} icon={<AutoIcon />} pt={11} dx={-2} a="Auto" b="Schedule" />
          <ThinRule $h={70} $m="8px 5px 0 6px" />
          <Big w={50} icon={<InspectIcon />} pt={16} a="Inspect" chev />
          <Big w={52} ml={1} icon={<MoveIcon />} pt={7} dx={1} a="Move" chev />
          <Big w={52} icon={<ModeIcon />} pt={8} a="Mode" chev />
        </Group>
        <Group w={208} label="Insert">
          <Big w={56} ml={8} icon={<InsertTask />} pt={5} a="Task" chev />
          <Big w={62} ml={1} icon={<InsertSummary />} pt={5} a="Summary" />
          <Big w={70} ml={2} icon={<InsertMilestone />} pt={3} dx={-8} a="Milestone" />
        </Group>
        <Group w={246} label="Properties">
          <Big w={84} ml={9} icon={<InfoBig />} pt={7} a="Information" />
          <SmallStack $ml={5}>
            <Small icon={<Note />} label="Notes" />
            <Small icon={<DetailsIcon />} label="Details" />
            <Small icon={<TimelineIcon />} label="Add to Timeline" ls={-0.03} />
          </SmallStack>
        </Group>
        <Group w={166} label="Editing">
          <Big w={56} ml={7} icon={<ScrollIcon />} pt={15} a="Scroll" b="to Task" />
          <SmallStack $ml={4}>
            <Small icon={<FindIcon />} label="Find" chev={20} />
            <Small icon={<Eraser />} label="Clear" chev={5} />
            <Small icon={<FillIcon />} label="Fill" chev={5} />
          </SmallStack>
        </Group>
        <Collapse><svg width="12" height="8" viewBox="0 0 12 8"><path d="M1 7 6 1.500 11 7" fill="none" stroke="#444" strokeWidth="1.500" /></svg></Collapse>
      </Ribbon>

      <Workspace>
        <ViewName>GANTT CHART</ViewName>
        <TablePanel>
          <HeadRow>
            <HeadCell $col="num" />
            <HeadCell $col="info"><InfoDot /></HeadCell>
            <Head col="mode">Task<br />Mode</Head>
            <Head col="name">Task Name</Head>
            <Head col="dur">Duration</Head>
            <Head col="start">Start</Head>
            <Head col="finish">Finish</Head>
          </HeadRow>
          <Rows>
            {TASKS.map((t, i) => {
              const [name, dur, start, finish, done, bold] = t || [];
              return (
                <Row key={i} $bold={bold} $dark={i === 25}>
                  <Cell $col="num">{i + 1}</Cell>
                  <Cell $col="info">{done ? <Check /> : null}</Cell>
                  <Cell $col="mode">{t && <Pin s={16} needle="#8a6a72" w={2.6} />}</Cell>
                  <Cell $col="name" $child={!bold}>
                    {bold && <Outline width="8" height="8"><path d="M7 1V7H1Z" fill="#444" stroke="#444" /></Outline>}{name}
                  </Cell>
                  <Cell $col="dur">{dur}</Cell>
                  <Cell $col="start">{start}</Cell>
                  <Cell $col="finish">{finish}</Cell>
                </Row>
              );
            })}
          </Rows>
          <ScrollBar $w={998} $ml={1}>
            <ScrollButton><Tri d="left" /></ScrollButton>
            <Thumb $w={645} />
            <ScrollButton $end><Tri d="right" /></ScrollButton>
          </ScrollBar>
        </TablePanel>
        <ChartPanel>
          <Timescale>
            <Tier $lh={22}>{QUARTERS.map(([q, w], i) => <Quarter key={q} $w={w} $ml={i ? 0 : -46}>{q}</Quarter>)}</Tier>
            <Tier $lh={20}>{MONTHS.map(([m, w], i) => <Month key={i} $w={w}>{m}</Month>)}</Tier>
          </Timescale>
          <Chart />
          <ScrollBar $w={861} $ml={1}>
            <ScrollButton><Tri d="left" /></ScrollButton>
            <Thumb $w={301} />
            <ScrollButton $end><Tri d="right" /></ScrollButton>
          </ScrollBar>
        </ChartPanel>
        <div>
          <VScroll>
            <ScrollButton $v><Tri d="up" /></ScrollButton>
            <VThumb />
            <ScrollButton $v><Tri d="down" /></ScrollButton>
          </VScroll>
          <Corner />
        </div>
      </Workspace>

      <StatusBar>
        <ReadyText>Ready</ReadyText>
        <Pin s={16} head="#fff" needle="#fff" w={2.5} />
        <Slot $ml={4}>New Tasks : Manually Scheduled</Slot>
        <ViewButtons>
          {VIEW_ICONS.map((icon, i) => (
            <ViewButton key={i} $on={i === 0}>
              <svg width="17" height="17" viewBox="0 0 17 17" fill="none" stroke="#e8f5e4" strokeWidth="1.200">{icon}</svg>
            </ViewButton>
          ))}
        </ViewButtons>
        <Zoom>
          <svg width="171" height="25" viewBox="1749 0 171 25" stroke="#e8f5e4" fill="none">
            <path d="M1757 12.500h10M1773 13.500h125M1835.500 9v9M1904 12.500h10M1909 7.500v10" strokeWidth="1.200" />
            <path d="M1819 6h6v14h-6z" fill="#fff" stroke="none" />
          </svg>
        </Zoom>
      </StatusBar>
    </Window>
  );
}
